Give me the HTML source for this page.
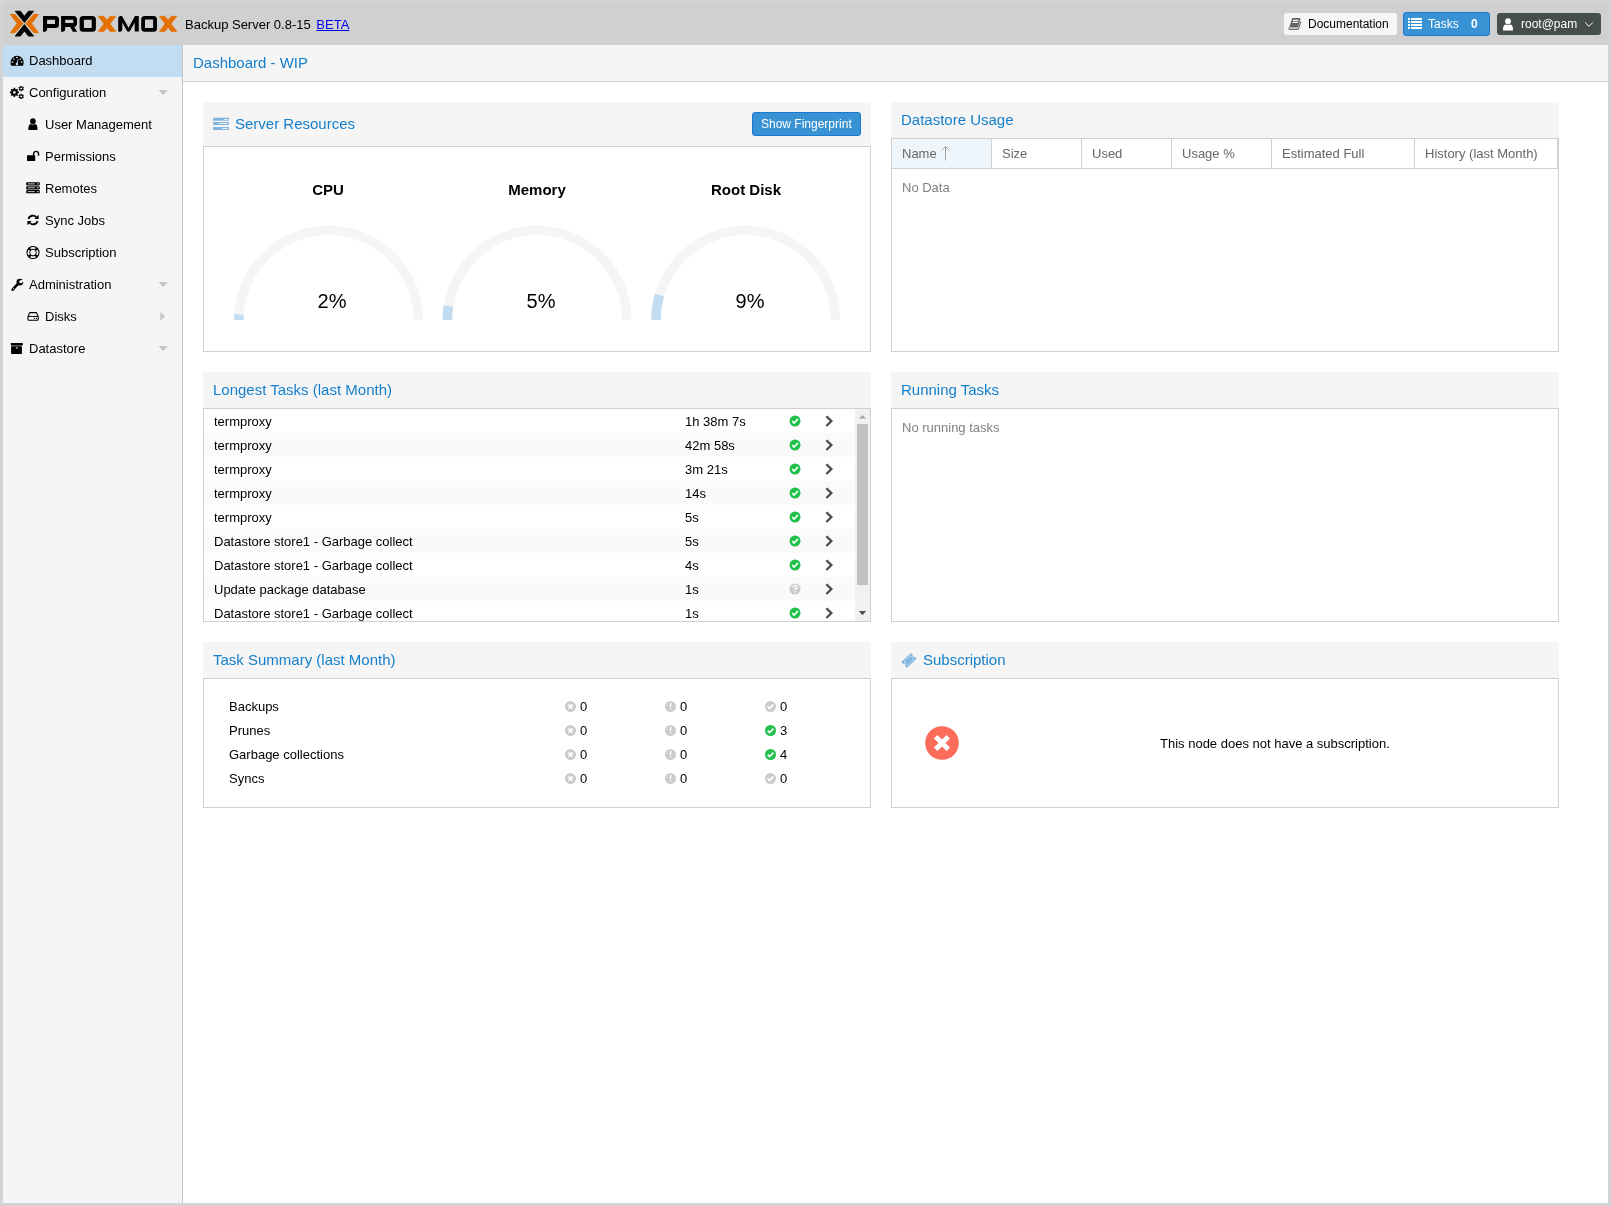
<!DOCTYPE html>
<html><head><meta charset="utf-8">
<style>
*{box-sizing:border-box;}
html,body{margin:0;padding:0;}
body{width:1611px;height:1206px;overflow:hidden;background:#d4d4d4;font-family:"Liberation Sans",sans-serif;font-size:13px;color:#000;position:relative;}
.abs{position:absolute;}
#hdr{left:3px;top:3px;width:1605px;height:42px;background:#d0d0d0;}
#side{left:3px;top:45px;width:179px;height:1158px;background:#f5f5f5;}
#sideb{left:182px;top:45px;width:1px;height:1158px;background:#c6c6c6;}
#main{left:183px;top:45px;width:1425px;height:1158px;background:#fff;}
#title{left:183px;top:45px;width:1425px;height:37px;background:#f5f5f5;border-bottom:1px solid #d0d0d0;}
.tt{font-size:15px;color:#157fcc;white-space:nowrap;}
.nav{left:3px;width:179px;height:32px;}
.nav .t{position:absolute;top:8px;white-space:nowrap;font-size:13px;line-height:16px;}
.nav svg{position:absolute;}
.sel{background:#c2ddf2;}
.ph{background:#f5f5f5;}
.pb{background:#fff;border:1px solid #d0d0d0;}
svg{display:block;}
.tr{left:0;width:651px;height:24px;font-size:13px;line-height:16px;white-space:nowrap;}
.ts{font-size:13px;line-height:16px;white-space:nowrap;}
.gh{top:146px;font-size:13px;line-height:16px;color:#666;white-space:nowrap;}
</style></head><body>
<svg width="0" height="0" style="position:absolute">
 <defs>
  <symbol id="ok" viewBox="0 0 12 12"><circle cx="6" cy="6" r="5.5" fill="#21bf4b"/><path d="M3.2,6.1 L5.1,8 L8.9,4.2" fill="none" stroke="#fff" stroke-width="1.7"/></symbol>
  <symbol id="okg" viewBox="0 0 12 12"><circle cx="6" cy="6" r="5.5" fill="#cccccc"/><path d="M3.2,6.1 L5.1,8 L8.9,4.2" fill="none" stroke="#fff" stroke-width="1.7"/></symbol>
  <symbol id="unk" viewBox="0 0 12 12"><circle cx="6" cy="6" r="5.6" fill="#cccccc"/><path d="M4.2,4.6 Q4.3,2.6 6.1,2.6 Q7.9,2.6 7.9,4.2 Q7.9,5.2 6.8,5.8 Q6.1,6.2 6.1,7.1" fill="none" stroke="#fff" stroke-width="1.5"/><rect x="5.3" y="8" width="1.6" height="1.6" fill="#fff"/></symbol>
  <symbol id="err" viewBox="0 0 12 12"><circle cx="6" cy="6" r="5.5" fill="#cccccc"/><path d="M3.9,3.9 L8.1,8.1 M8.1,3.9 L3.9,8.1" fill="none" stroke="#fff" stroke-width="1.6"/></symbol>
  <symbol id="warn" viewBox="0 0 12 12"><circle cx="6" cy="6" r="5.5" fill="#cccccc"/><path d="M5.2,2.5 H6.8 L6.6,6.8 H5.4 Z" fill="#fff"/><rect x="5.25" y="7.6" width="1.5" height="1.5" fill="#fff"/></symbol>
  <symbol id="chev" viewBox="0 0 10 14"><path d="M2.4,2.2 L7.4,7.1 L2.4,12" fill="none" stroke="#4d4d4d" stroke-width="2.3"/></symbol>
 </defs>
</svg>
<div id="root" style="position:absolute;left:0;top:0;width:1611px;height:1206px;will-change:transform;">
<div id="hdr" class="abs"></div>
<div id="side" class="abs"></div>
<div id="sideb" class="abs"></div>
<div id="main" class="abs"></div>
<div id="title" class="abs"></div>
<div class="abs tt" style="left:193px;top:54px;">Dashboard - WIP</div>


<!-- header -->
<svg class="abs" style="left:8px;top:8px;" width="172" height="32" viewBox="0 0 172 32">
 <g fill="#e57000" stroke="#e57000" stroke-width="0.8" stroke-linejoin="round">
  <path d="M2.2,6.3 L6.9,6.3 L15.1,15.6 L6.9,24.8 L2.2,24.8 L9.2,15.6 Z"/>
  <path d="M30.6,6.3 L25.9,6.3 L17.7,15.6 L25.9,24.8 L30.6,24.8 L23.6,15.6 Z"/>
 </g>
 <g fill="#000" stroke="#000" stroke-width="0.8" stroke-linejoin="round">
  <path d="M7.2,3.2 L12.4,3.2 L16.4,8.3 L20.4,3.2 L25.6,3.2 L16.4,14.6 Z"/>
  <path d="M7.2,28.1 L12.4,28.1 L16.4,23.0 L20.4,28.1 L25.6,28.1 L16.4,16.6 Z"/>
 </g>
 <g fill="#000">
  <!-- P -->
  <path d="M35,8 H47.5 Q51,8 51,11.5 V16.5 Q51,20 47.5,20 H39.1 V21 Q39,23.7 36.5,23.7 H35 Z M39.1,11.8 V16.1 H47 V11.8 Z"/>
  <!-- R -->
  <path d="M53.1,8 H65.5 Q69,8 69,11.5 V15.5 Q69,18.5 66.3,19 L69.2,23.7 H64.8 L62.2,19 H57.2 V21 Q57.1,23.7 54.6,23.7 H53.1 Z M57.2,11.8 V15.1 H65.3 V11.8 Z"/>
  <!-- O -->
  <path d="M75.1,8 H84.4 Q87.9,8 87.9,11.5 V20.2 Q87.9,23.7 84.4,23.7 H75.1 Q71.6,23.7 71.6,20.2 V11.5 Q71.6,8 75.1,8 Z M75.9,11.8 V20 H83.7 V11.8 Z"/>
  <!-- M -->
  <path d="M110.2,23.6 V10.5 Q110.2,8 112.8,8 H114 L120.5,19.8 L127,8 H130.8 V23.6 H126.7 V14.6 L122.3,22.5 Q121.6,23.7 120.5,23.7 Q119.4,23.7 118.7,22.5 L114.3,14.6 V21 Q114.3,23.7 111.8,23.7 Z"/>
  <!-- O2 -->
  <path d="M136.7,8 H145.5 Q149,8 149,11.5 V20.2 Q149,23.7 145.5,23.7 H136.7 Q133.2,23.7 133.2,20.2 V11.5 Q133.2,8 136.7,8 Z M137,11.6 V20.1 H145.1 V11.6 Z"/>
 </g>
 <g fill="#e57000" stroke="#e57000" stroke-width="0.7" stroke-linejoin="round">
  <path d="M90.2,8.3 L95.8,8.3 L99,12.2 L102.2,8.3 L107.8,8.3 L102,15.85 L107.8,23.4 L102.2,23.4 L99,19.5 L95.8,23.4 L90.2,23.4 L96,15.85 Z"/>
  <path d="M151.4,8.3 L157,8.3 L160.1,12.2 L163.2,8.3 L168.8,8.3 L163.1,15.85 L168.8,23.4 L163.2,23.4 L160.1,19.5 L157,23.4 L151.4,23.4 L157.1,15.85 Z"/>

 </g>
</svg>
<div class="abs" style="left:185px;top:17px;font-size:13px;line-height:16px;color:#000;white-space:nowrap;">Backup Server 0.8-15 <span style="color:#0000ee;text-decoration:underline;margin-left:2px;">BETA</span></div>

<div class="abs" style="left:1284px;top:13px;width:113px;height:22px;background:#f5f5f5;border-radius:3px;"></div>
<svg class="abs" style="left:1288px;top:17px;" width="15" height="14" viewBox="0 0 15 14">
 <path d="M4.3,1 H11.9 Q12.6,1 12.4,1.8 L10.3,9.6 Q10,10.5 9.2,10.5 H1.2 Z" fill="#666"/>
 <path d="M5.2,2.8 H10.6 L10.3,3.9 H4.9 Z M4.7,4.8 H10.1 L9.8,5.9 H4.4 Z" fill="#f5f5f5"/>
 <path d="M1.2,10.5 Q0.6,12.3 1.8,12.4 H9.6 Q10.3,12.4 10.6,11.4 L12.9,4.5" fill="none" stroke="#666" stroke-width="1.1"/>
</svg>
<div class="abs" style="left:1308px;top:17px;font-size:12px;line-height:14px;color:#000;white-space:nowrap;">Documentation</div>

<div class="abs" style="left:1403px;top:12px;width:87px;height:24px;background:#3892d4;border:1px solid #1a7ad0;border-radius:3px;"></div>
<svg class="abs" style="left:1408px;top:18px;" width="14" height="11" viewBox="0 0 14 11" fill="#fff">
 <rect x="0" y="0" width="2" height="2"/><rect x="3" y="0" width="11" height="2"/>
 <rect x="0" y="3" width="2" height="2"/><rect x="3" y="3" width="11" height="2"/>
 <rect x="0" y="6" width="2" height="2"/><rect x="3" y="6" width="11" height="2"/>
 <rect x="0" y="9" width="2" height="2"/><rect x="3" y="9" width="11" height="2"/>
</svg>
<div class="abs" style="left:1428px;top:17px;font-size:12px;line-height:14px;color:#fff;white-space:nowrap;">Tasks</div>
<div class="abs" style="left:1471px;top:17px;font-size:12px;line-height:14px;color:#fff;font-weight:bold;white-space:nowrap;">0</div>

<div class="abs" style="left:1497px;top:13px;width:104px;height:22px;background:#464d4d;border-radius:3px;"></div>
<svg class="abs" style="left:1502px;top:18px;" width="12" height="13" viewBox="0 0 12 13" fill="#fff">
 <ellipse cx="6" cy="3.3" rx="2.9" ry="3.1"/>
 <path d="M1,12.2 Q0.8,7.3 3.6,6.6 Q6,8 8.4,6.6 Q11.2,7.3 11,12.2 Q11,12.6 10.2,12.6 H1.8 Q1,12.6 1,12.2 Z"/>
</svg>
<div class="abs" style="left:1521px;top:17px;font-size:12px;line-height:14px;color:#fff;white-space:nowrap;">root@pam</div>
<svg class="abs" style="left:1584px;top:21px;" width="10" height="7" viewBox="0 0 10 7"><path d="M1.2,1.5 L5,5.3 L8.8,1.5" fill="none" stroke="#fff" stroke-width="1"/></svg>

<!-- nav -->
<div class="abs nav sel" style="top:45px;"><span class="t" style="left:26px;">Dashboard</span></div>
<div class="abs nav" style="top:77px;"><span class="t" style="left:26px;">Configuration</span></div>
<div class="abs nav" style="top:109px;"><span class="t" style="left:42px;">User Management</span></div>
<div class="abs nav" style="top:141px;"><span class="t" style="left:42px;">Permissions</span></div>
<div class="abs nav" style="top:173px;"><span class="t" style="left:42px;">Remotes</span></div>
<div class="abs nav" style="top:205px;"><span class="t" style="left:42px;">Sync Jobs</span></div>
<div class="abs nav" style="top:237px;"><span class="t" style="left:42px;">Subscription</span></div>
<div class="abs nav" style="top:269px;"><span class="t" style="left:26px;">Administration</span></div>
<div class="abs nav" style="top:301px;"><span class="t" style="left:42px;">Disks</span></div>
<div class="abs nav" style="top:333px;"><span class="t" style="left:26px;">Datastore</span></div>

<!-- nav icons -->
<svg class="abs" style="left:10px;top:55px;" width="14" height="11" viewBox="0 0 14 11">
 <path d="M1.2,10.75 Q0.5,9 0.6,7.3 A6.5,6.5 0 0 1 13.6,7.3 Q13.7,9 13,10.75 Z" fill="#000"/>
 <g fill="#c2ddf2"><ellipse cx="7" cy="2.5" rx="1.1" ry="0.75"/><circle cx="3.8" cy="4" r="0.85"/><circle cx="10.3" cy="4" r="0.85"/><circle cx="2.4" cy="7.1" r="0.9"/><circle cx="11.5" cy="7.1" r="0.9"/><circle cx="6.9" cy="9" r="1.3"/></g>
 <path d="M6.9,9 L8.1,4.3" stroke="#c2ddf2" stroke-width="0.9"/>
</svg>
<svg class="abs" style="left:9px;top:86px;" width="16" height="14" viewBox="0 0 16 14">
 <g fill="#000" fill-rule="evenodd"><path d="M4.59,3.10 L4.59,1.87 L6.21,1.87 L6.21,3.10 L7.17,3.49 L8.03,2.63 L9.17,3.77 L8.31,4.63 L8.70,5.59 L9.93,5.59 L9.93,7.21 L8.70,7.21 L8.31,8.17 L9.17,9.03 L8.03,10.17 L7.17,9.31 L6.21,9.70 L6.21,10.93 L4.59,10.93 L4.59,9.70 L3.63,9.31 L2.77,10.17 L1.63,9.03 L2.49,8.17 L2.10,7.21 L0.87,7.21 L0.87,5.59 L2.10,5.59 L2.49,4.63 L1.63,3.77 L2.77,2.63 L3.63,3.49 Z M6.70,6.40 A1.3,1.3 0 1 0 4.10,6.40 A1.3,1.3 0 1 0 6.70,6.40 Z"/><path d="M11.49,0.62 L11.48,-0.10 L12.92,-0.10 L12.91,0.62 L13.56,1.00 L14.18,0.62 L14.90,1.88 L14.27,2.23 L14.27,2.97 L14.90,3.32 L14.18,4.58 L13.56,4.20 L12.91,4.58 L12.92,5.30 L11.48,5.30 L11.49,4.58 L10.84,4.20 L10.22,4.58 L9.50,3.32 L10.13,2.97 L10.13,2.23 L9.50,1.88 L10.22,0.62 L10.84,1.00 Z M13.20,2.60 A1.0,1.0 0 1 0 11.20,2.60 A1.0,1.0 0 1 0 13.20,2.60 Z"/><path d="M11.49,8.42 L11.48,7.70 L12.92,7.70 L12.91,8.42 L13.56,8.80 L14.18,8.42 L14.90,9.68 L14.27,10.03 L14.27,10.77 L14.90,11.12 L14.18,12.38 L13.56,12.00 L12.91,12.38 L12.92,13.10 L11.48,13.10 L11.49,12.38 L10.84,12.00 L10.22,12.38 L9.50,11.12 L10.13,10.77 L10.13,10.03 L9.50,9.68 L10.22,8.42 L10.84,8.80 Z M13.20,10.40 A1.0,1.0 0 1 0 11.20,10.40 A1.0,1.0 0 1 0 13.20,10.40 Z"/></g>
</svg>
<svg class="abs" style="left:28px;top:118px;" width="10" height="13" viewBox="0 0 10 13" fill="#000">
 <ellipse cx="4.9" cy="3.2" rx="2.8" ry="2.9"/>
 <path d="M0.3,11.4 Q0.2,6.6 2.6,6 Q4.9,7.2 7.2,6 Q9.6,6.6 9.5,11.4 Q9.5,12.1 8.7,12.1 H1.1 Q0.3,12.1 0.3,11.4 Z"/>
</svg>
<svg class="abs" style="left:26px;top:150px;" width="14" height="12" viewBox="0 0 14 12">
 <rect x="1" y="5.2" width="8.2" height="5.9" rx="0.6" fill="#000"/>
 <path d="M7.6,5.6 V3.8 A2.45,2.45 0 0 1 12.5,3.8 V5.2" fill="none" stroke="#000" stroke-width="1.4" stroke-linecap="round"/>
</svg>
<svg class="abs" style="left:26px;top:182px;" width="14" height="12" viewBox="0 0 14 12">
 <g fill="#000"><rect x="0.2" y="0.3" width="13.6" height="3.2" rx="0.9"/><rect x="0.2" y="4.2" width="13.6" height="3.2" rx="0.9"/><rect x="0.2" y="8.1" width="13.6" height="3.2" rx="0.9"/></g>
 <g fill="#f5f5f5"><rect x="1.8" y="1.5" width="7" height="0.8"/><rect x="1.8" y="5.4" width="7" height="0.8"/><rect x="1.8" y="9.3" width="7" height="0.8"/>
 <rect x="10.8" y="1.5" width="2" height="0.8"/><rect x="10.8" y="5.4" width="2" height="0.8"/><rect x="10.8" y="9.3" width="2" height="0.8"/></g>
</svg>
<svg class="abs" style="left:27px;top:214px;" width="12" height="12" viewBox="0 0 12 12">
 <path d="M1.4,4.9 A4.7,4.7 0 0 1 9.3,3.1" fill="none" stroke="#000" stroke-width="1.9"/>
 <path d="M11.6,0.7 V4.9 H7.4 Z" fill="#000"/>
 <path d="M10.6,7.1 A4.7,4.7 0 0 1 2.7,8.9" fill="none" stroke="#000" stroke-width="1.9"/>
 <path d="M0.4,11.3 V7.1 H4.6 Z" fill="#000"/>
</svg>
<svg class="abs" style="left:26px;top:246px;" width="14" height="14" viewBox="0 0 14 14">
 <circle cx="7" cy="6.5" r="6.6" fill="#000"/>
 <circle cx="7" cy="6.5" r="2.7" fill="#f5f5f5"/>
 <path d="M10.90,4.16 A4.55,4.55 0 0 1 10.90,8.84 M9.34,10.40 A4.55,4.55 0 0 1 4.66,10.40 M3.10,8.84 A4.55,4.55 0 0 1 3.10,4.16 M4.66,2.60 A4.55,4.55 0 0 1 9.34,2.60" fill="none" stroke="#f5f5f5" stroke-width="1.8"/>
</svg>
<svg class="abs" style="left:10px;top:278px;" width="14" height="14" viewBox="0 0 14 14">
 <path d="M2.6,11.7 L7.2,6.7" stroke="#000" stroke-width="2.6" stroke-linecap="round"/>
 <circle cx="9.9" cy="4.1" r="3.4" fill="#000"/>
 <circle cx="10.7" cy="3.8" r="1.55" fill="#f5f5f5"/>
 <path d="M10.7,3.8 L14,2.3" stroke="#f5f5f5" stroke-width="2.4"/>
 <circle cx="3.4" cy="10.5" r="0.5" fill="#f5f5f5"/>
</svg>
<svg class="abs" style="left:27px;top:311px;" width="13" height="11" viewBox="0 0 13 11">
 <path d="M1,5.5 L2.7,1.6 H9.5 L11.2,5.5 V8.6 Q11.2,9.3 10.5,9.3 H1.7 Q1,9.3 1,8.6 Z" fill="none" stroke="#000" stroke-width="1.1" stroke-linejoin="round"/>
 <path d="M1,5.45 H11.2" stroke="#000" stroke-width="1"/>
 <circle cx="7.4" cy="7.4" r="0.6" fill="#000"/><circle cx="9.6" cy="7.4" r="0.6" fill="#000"/>
</svg>
<svg class="abs" style="left:10px;top:342px;" width="14" height="13" viewBox="0 0 14 13">
 <rect x="0.8" y="1" width="12.1" height="2.2" rx="0.4" fill="#000"/>
 <rect x="1.1" y="3.2" width="10.8" height="1" fill="#3c3c3c"/>
 <rect x="1.1" y="4.2" width="10.8" height="7.7" rx="0.4" fill="#000"/>
 <rect x="5.9" y="5" width="1.9" height="1.8" fill="#888"/>
</svg>
<svg class="abs" style="left:155px;top:88px;" width="16" height="10" viewBox="0 0 16 10"><path d="M3.5,2 H13 L8.2,7.2 Z" fill="#c9c9c9"/></svg>
<svg class="abs" style="left:155px;top:280px;" width="16" height="10" viewBox="0 0 16 10"><path d="M3.5,2 H13 L8.2,7.2 Z" fill="#c9c9c9"/></svg>
<svg class="abs" style="left:155px;top:344px;" width="16" height="10" viewBox="0 0 16 10"><path d="M3.5,2 H13 L8.2,7.2 Z" fill="#c9c9c9"/></svg>
<svg class="abs" style="left:155px;top:308px;" width="14" height="16" viewBox="0 0 14 16"><path d="M5.2,4 V12.9 L10.3,8.3 Z" fill="#c9c9c9"/></svg>

<!-- panels -->
<div class="abs ph" style="left:203px;top:102px;width:668px;height:44px;"></div>
<div class="abs pb" style="left:203px;top:146px;width:668px;height:206px;"></div>
<div class="abs tt" style="left:235px;top:115px;">Server Resources</div>

<div class="abs ph" style="left:891px;top:102px;width:668px;height:36px;"></div>
<div class="abs pb" style="left:891px;top:138px;width:668px;height:214px;"></div>
<div class="abs tt" style="left:901px;top:111px;">Datastore Usage</div>

<div class="abs ph" style="left:203px;top:372px;width:668px;height:36px;"></div>
<div class="abs pb" style="left:203px;top:408px;width:668px;height:214px;"></div>
<div class="abs tt" style="left:213px;top:381px;">Longest Tasks (last Month)</div>

<div class="abs ph" style="left:891px;top:372px;width:668px;height:36px;"></div>
<div class="abs pb" style="left:891px;top:408px;width:668px;height:214px;"></div>
<div class="abs tt" style="left:901px;top:381px;">Running Tasks</div>

<div class="abs ph" style="left:203px;top:642px;width:668px;height:36px;"></div>
<div class="abs pb" style="left:203px;top:678px;width:668px;height:130px;"></div>
<div class="abs tt" style="left:213px;top:651px;">Task Summary (last Month)</div>

<div class="abs ph" style="left:891px;top:642px;width:668px;height:36px;"></div>
<div class="abs pb" style="left:891px;top:678px;width:668px;height:130px;"></div>
<div class="abs tt" style="left:923px;top:651px;">Subscription</div>

<!-- server resources content -->
<svg class="abs" style="left:213px;top:117px;" width="16" height="13" viewBox="0 0 16 13">
 <g fill="#81b5e0"><rect x="0" y="0.8" width="16" height="3" rx="0.6"/><rect x="0" y="5.1" width="16" height="2.9" rx="0.6"/><rect x="0" y="10" width="16" height="2.9" rx="0.6"/></g>
 <g fill="#eef3f8"><rect x="11.1" y="2" width="3.7" height="0.9" rx="0.4"/><rect x="6" y="6" width="8.8" height="0.9" rx="0.4"/><rect x="9.1" y="11" width="5.7" height="0.9" rx="0.4"/></g>
</svg>
<div class="abs" style="left:752px;top:112px;width:109px;height:24px;background:#3892d4;border:1px solid #1a7ad0;border-radius:3px;"></div>
<div class="abs" style="left:761px;top:117px;font-size:12px;line-height:14px;color:#fff;white-space:nowrap;">Show Fingerprint</div>

<div class="abs" style="left:278px;top:181px;width:100px;text-align:center;font-size:15px;line-height:17px;font-weight:bold;">CPU</div>
<div class="abs" style="left:487px;top:181px;width:100px;text-align:center;font-size:15px;line-height:17px;font-weight:bold;">Memory</div>
<div class="abs" style="left:696px;top:181px;width:100px;text-align:center;font-size:15px;line-height:17px;font-weight:bold;">Root Disk</div>
<svg class="abs" style="left:203px;top:146px;" width="668" height="206" viewBox="203 146 668 206">
 <g fill="none" stroke-width="9.5">
  <path d="M238.75,320 A89.75,89.75 0 0 1 418.25,320" stroke="#f5f5f5"/>
  <path d="M238.75,320 A89.75,89.75 0 0 1 238.95,314.4" stroke="#c2ddf2"/>
  <path d="M447.35,320 A89.75,89.75 0 0 1 626.85,320" stroke="#f5f5f5"/>
  <path d="M447.35,320 A89.75,89.75 0 0 1 448.45,306" stroke="#c2ddf2"/>
  <path d="M655.95,320 A89.75,89.75 0 0 1 835.45,320" stroke="#f5f5f5"/>
  <path d="M655.95,320 A89.75,89.75 0 0 1 659.4,295" stroke="#c2ddf2"/>
 </g>
</svg>
<div class="abs" style="left:282px;top:290px;width:100px;text-align:center;font-size:20px;line-height:23px;">2%</div>
<div class="abs" style="left:491px;top:290px;width:100px;text-align:center;font-size:20px;line-height:23px;">5%</div>
<div class="abs" style="left:700px;top:290px;width:100px;text-align:center;font-size:20px;line-height:23px;">9%</div>

<!-- datastore usage grid -->
<div class="abs" style="left:892px;top:139px;width:99px;height:29px;background:#eef5fb;"></div>
<div class="abs" style="left:892px;top:168px;width:666px;height:1px;background:#d0d0d0;"></div>
<div class="abs" style="left:991px;top:139px;width:1px;height:29px;background:#d0d0d0;"></div>
<div class="abs" style="left:1081px;top:139px;width:1px;height:29px;background:#d0d0d0;"></div>
<div class="abs" style="left:1171px;top:139px;width:1px;height:29px;background:#d0d0d0;"></div>
<div class="abs" style="left:1271px;top:139px;width:1px;height:29px;background:#d0d0d0;"></div>
<div class="abs" style="left:1414px;top:139px;width:1px;height:29px;background:#d0d0d0;"></div>
<div class="abs" style="left:1557px;top:139px;width:1px;height:29px;background:#d0d0d0;"></div>
<div class="abs gh" style="left:902px;">Name</div>
<svg class="abs" style="left:940px;top:145px;" width="11" height="17" viewBox="0 0 11 17"><path d="M5.5,1.5 V15.5 M1.5,5.5 L5.5,1.5 L9.5,5.5" fill="none" stroke="#a3a3a3" stroke-width="1"/></svg>
<div class="abs gh" style="left:1002px;">Size</div>
<div class="abs gh" style="left:1092px;">Used</div>
<div class="abs gh" style="left:1182px;">Usage %</div>
<div class="abs gh" style="left:1282px;">Estimated Full</div>
<div class="abs gh" style="left:1425px;">History (last Month)</div>
<div class="abs" style="left:902px;top:180px;font-size:13px;line-height:16px;color:#808080;white-space:nowrap;">No Data</div>

<!-- running tasks -->
<div class="abs" style="left:902px;top:420px;font-size:13px;line-height:16px;color:#808080;white-space:nowrap;">No running tasks</div>

<!-- longest tasks -->
<div class="abs" style="left:204px;top:409px;width:651px;height:212px;overflow:hidden;">
<div class="abs tr" style="top:0px;background:#fff;"><span class="abs" style="left:10px;top:5px;">termproxy</span><span class="abs" style="left:481px;top:5px;">1h 38m 7s</span><svg class="abs" style="left:585px;top:6px;" width="12" height="12"><use href="#ok"/></svg><svg class="abs" style="left:620px;top:5px;" width="10" height="14"><use href="#chev"/></svg></div>
<div class="abs tr" style="top:24px;background:#fafafa;"><span class="abs" style="left:10px;top:5px;">termproxy</span><span class="abs" style="left:481px;top:5px;">42m 58s</span><svg class="abs" style="left:585px;top:6px;" width="12" height="12"><use href="#ok"/></svg><svg class="abs" style="left:620px;top:5px;" width="10" height="14"><use href="#chev"/></svg></div>
<div class="abs tr" style="top:48px;background:#fff;"><span class="abs" style="left:10px;top:5px;">termproxy</span><span class="abs" style="left:481px;top:5px;">3m 21s</span><svg class="abs" style="left:585px;top:6px;" width="12" height="12"><use href="#ok"/></svg><svg class="abs" style="left:620px;top:5px;" width="10" height="14"><use href="#chev"/></svg></div>
<div class="abs tr" style="top:72px;background:#fafafa;"><span class="abs" style="left:10px;top:5px;">termproxy</span><span class="abs" style="left:481px;top:5px;">14s</span><svg class="abs" style="left:585px;top:6px;" width="12" height="12"><use href="#ok"/></svg><svg class="abs" style="left:620px;top:5px;" width="10" height="14"><use href="#chev"/></svg></div>
<div class="abs tr" style="top:96px;background:#fff;"><span class="abs" style="left:10px;top:5px;">termproxy</span><span class="abs" style="left:481px;top:5px;">5s</span><svg class="abs" style="left:585px;top:6px;" width="12" height="12"><use href="#ok"/></svg><svg class="abs" style="left:620px;top:5px;" width="10" height="14"><use href="#chev"/></svg></div>
<div class="abs tr" style="top:120px;background:#fafafa;"><span class="abs" style="left:10px;top:5px;">Datastore store1 - Garbage collect</span><span class="abs" style="left:481px;top:5px;">5s</span><svg class="abs" style="left:585px;top:6px;" width="12" height="12"><use href="#ok"/></svg><svg class="abs" style="left:620px;top:5px;" width="10" height="14"><use href="#chev"/></svg></div>
<div class="abs tr" style="top:144px;background:#fff;"><span class="abs" style="left:10px;top:5px;">Datastore store1 - Garbage collect</span><span class="abs" style="left:481px;top:5px;">4s</span><svg class="abs" style="left:585px;top:6px;" width="12" height="12"><use href="#ok"/></svg><svg class="abs" style="left:620px;top:5px;" width="10" height="14"><use href="#chev"/></svg></div>
<div class="abs tr" style="top:168px;background:#fafafa;"><span class="abs" style="left:10px;top:5px;">Update package database</span><span class="abs" style="left:481px;top:5px;">1s</span><svg class="abs" style="left:585px;top:6px;" width="12" height="12"><use href="#unk"/></svg><svg class="abs" style="left:620px;top:5px;" width="10" height="14"><use href="#chev"/></svg></div>
<div class="abs tr" style="top:192px;background:#fff;"><span class="abs" style="left:10px;top:5px;">Datastore store1 - Garbage collect</span><span class="abs" style="left:481px;top:5px;">1s</span><svg class="abs" style="left:585px;top:6px;" width="12" height="12"><use href="#ok"/></svg><svg class="abs" style="left:620px;top:5px;" width="10" height="14"><use href="#chev"/></svg></div>
</div>
<div class="abs" style="left:855px;top:409px;width:15px;height:212px;background:#f1f1f1;"></div>
<div class="abs" style="left:857px;top:424px;width:11px;height:161px;background:#c1c1c1;"></div>
<svg class="abs" style="left:855px;top:409px;" width="15" height="15"><path d="M4,9.5 H11 L7.5,6 Z" fill="#a3a3a3"/></svg>
<svg class="abs" style="left:855px;top:606px;" width="15" height="15"><path d="M3.8,5 H11.2 L7.5,9.2 Z" fill="#505050"/></svg>
<!-- task summary -->
<div class="abs ts" style="left:229px;top:699px;">Backups</div>
<svg class="abs" style="left:565px;top:701px;" width="12" height="12"><use href="#err" x="-0.5" y="-0.5"/></svg><div class="abs ts" style="left:580px;top:699px;">0</div>
<svg class="abs" style="left:665px;top:701px;" width="12" height="12"><use href="#warn" x="-0.5" y="-0.5"/></svg><div class="abs ts" style="left:680px;top:699px;">0</div>
<svg class="abs" style="left:765px;top:701px;" width="12" height="12"><use href="#okg" x="-0.5" y="-0.5"/></svg><div class="abs ts" style="left:780px;top:699px;">0</div>
<div class="abs ts" style="left:229px;top:723px;">Prunes</div>
<svg class="abs" style="left:565px;top:725px;" width="12" height="12"><use href="#err" x="-0.5" y="-0.5"/></svg><div class="abs ts" style="left:580px;top:723px;">0</div>
<svg class="abs" style="left:665px;top:725px;" width="12" height="12"><use href="#warn" x="-0.5" y="-0.5"/></svg><div class="abs ts" style="left:680px;top:723px;">0</div>
<svg class="abs" style="left:765px;top:725px;" width="12" height="12"><use href="#ok" x="-0.5" y="-0.5"/></svg><div class="abs ts" style="left:780px;top:723px;">3</div>
<div class="abs ts" style="left:229px;top:747px;">Garbage collections</div>
<svg class="abs" style="left:565px;top:749px;" width="12" height="12"><use href="#err" x="-0.5" y="-0.5"/></svg><div class="abs ts" style="left:580px;top:747px;">0</div>
<svg class="abs" style="left:665px;top:749px;" width="12" height="12"><use href="#warn" x="-0.5" y="-0.5"/></svg><div class="abs ts" style="left:680px;top:747px;">0</div>
<svg class="abs" style="left:765px;top:749px;" width="12" height="12"><use href="#ok" x="-0.5" y="-0.5"/></svg><div class="abs ts" style="left:780px;top:747px;">4</div>
<div class="abs ts" style="left:229px;top:771px;">Syncs</div>
<svg class="abs" style="left:565px;top:773px;" width="12" height="12"><use href="#err" x="-0.5" y="-0.5"/></svg><div class="abs ts" style="left:580px;top:771px;">0</div>
<svg class="abs" style="left:665px;top:773px;" width="12" height="12"><use href="#warn" x="-0.5" y="-0.5"/></svg><div class="abs ts" style="left:680px;top:771px;">0</div>
<svg class="abs" style="left:765px;top:773px;" width="12" height="12"><use href="#okg" x="-0.5" y="-0.5"/></svg><div class="abs ts" style="left:780px;top:771px;">0</div>
<!-- subscription -->
<svg class="abs" style="left:899px;top:651px;" width="20" height="19" viewBox="0 0 20 19">
 <g transform="translate(10,9.4) rotate(-44)">
  <path d="M-6.6,-4 H6.6 V-1.3 Q5.5,-1.1 5.5,0 Q5.5,1.1 6.6,1.3 V4 H-6.6 V1.3 Q-5.5,1.1 -5.5,0 Q-5.5,-1.1 -6.6,-1.3 Z" fill="#81b5e0"/>
  <rect x="-4.4" y="-2.4" width="8.8" height="4.8" fill="none" stroke="#f5f5f5" stroke-width="0.85" stroke-dasharray="1.1 0.6"/>
 </g>
</svg>
<svg class="abs" style="left:923px;top:724px;" width="38" height="38" viewBox="0 0 38 38">
 <circle cx="19" cy="19" r="16.8" fill="#fd6b59"/>
 <path d="M12.7,12.7 L25.3,25.3 M25.3,12.7 L12.7,25.3" stroke="#fff" stroke-width="5"/>
</svg>
<div class="abs" style="left:1160px;top:736px;font-size:13px;line-height:16px;white-space:nowrap;">This node does not have a subscription.</div>

</div>
</body></html>
